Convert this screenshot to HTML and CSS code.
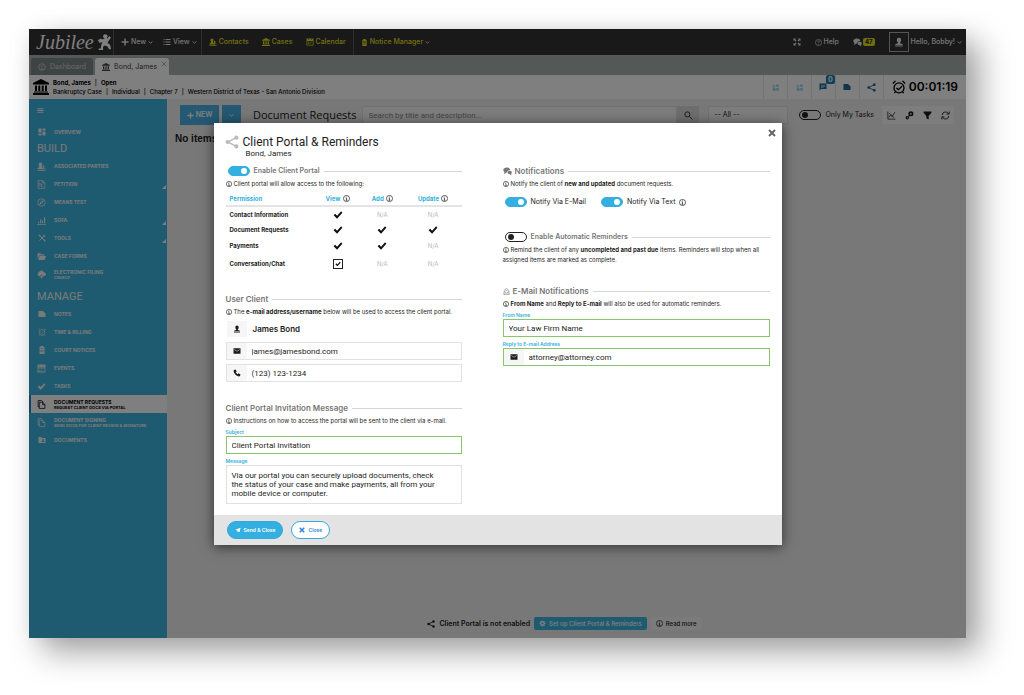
FILE: index.html
```html
<!DOCTYPE html>
<html lang="en">
<head>
<meta charset="utf-8">
<title>Jubilee - Client Portal &amp; Reminders</title>
<meta name="viewport" content="width=device-width, initial-scale=1">
<link rel="stylesheet" href="styles.css">
</head>
<body>
<svg class="sprite" aria-hidden="true">
  <symbol id="plus" viewBox="0 0 16 16"><path d="M6.500 1h3v5.500h5.500v3H9.500V15h-3V9.500H1v-3h5.500z"/></symbol>
  <symbol id="list" viewBox="0 0 16 16"><path d="M1 2h2v2H1zM5 2h10v2H5zM1 7h2v2H1zM5 7h10v2H5zM1 12h2v2H1zM5 12h10v2H5z"/></symbol>
  <symbol id="chevron" viewBox="0 0 16 16"><path d="M2 5l6 5 6-5" fill="none" stroke="currentColor" stroke-width="3"/></symbol>
  <symbol id="contacts" viewBox="0 0 16 16"><path d="M6 1a3 3 0 0 1 3 3c0 1.500-.7 2.500-1 3v2l4 2v2H1v-2l3-2V7C3.500 6 3 5.500 3 4a3 3 0 0 1 3-3zM1 14h14v1.500H1zM10 6a2 2 0 0 1 3 2c0 1 0 2-.5 2l2.500 1.500V13h-2v-2l-3-2z"/></symbol>
  <symbol id="bank" viewBox="0 0 16 16"><path d="M8 0l8 4v1.500H0V4zM2 6.500h2V12H2zM5.300 6.500h2V12h-2zM8.700 6.500h2V12h-2zM12 6.500h2V12h-2zM1 12.500h14v1H1zM0 14h16v2H0z"/></symbol>
  <symbol id="calendar" viewBox="0 0 16 16"><path fill-rule="evenodd" d="M1 1h14v14H1zM2.500 6v7.500h11V6zM4 7.500h2v1.500H4zM7 7.500h2v1.500H7zM10 7.500h2v1.500h-2zM4 10.500h2V12H4zM7 10.500h2V12H7zM4 2.500V4h1.500V2.500zM10.500 2.500V4H12V2.500z"/></symbol>
  <symbol id="clipboard" viewBox="0 0 16 16"><path fill-rule="evenodd" d="M5 0h6v2h2v14H3V2h2zM5 5v1h6V5zM5 8v1h6V8zM5 11v1h6v-1z"/></symbol>
  <symbol id="expand" viewBox="0 0 16 16"><path d="M1 1h5L4.500 2.500 7 5 5 7 2.500 4.500 1 6zM15 1v5l-1.500-1.500L11 7 9 5l2.500-2.500L10 1zM1 15v-5l1.500 1.500L5 9l2 2-2.500 2.500L6 15zM15 15h-5l1.500-1.500L9 11l2-2 2.500 2.500L15 10z"/></symbol>
  <symbol id="help" viewBox="0 0 16 16"><g fill="none" stroke="currentColor" stroke-width="1.500"><circle cx="8" cy="8" r="7"/><path d="M5.800 6.300a2.200 2.200 0 1 1 3.200 2c-.8.400-1 .7-1 1.700M8 11.300v1.400"/></g></symbol>
  <symbol id="info" viewBox="0 0 16 16"><g fill="none" stroke="currentColor"><circle cx="8" cy="8" r="7" stroke-width="1.600"/><path d="M6 7h2v5M6 12h4M8 3.500v1.800" stroke-width="1.600"/></g></symbol>
  <symbol id="chat" viewBox="0 0 16 16"><path d="M7 1c3.500 0 6 2 6 4.500-3 0-5.500 1.500-5.500 4.300H6L2 13l.5-4C1.500 8.200.5 7 .5 5.500.5 3 3.500 1 7 1zM12 6.800c2 0 3.700 1.300 3.700 3 0 1-.5 1.800-1.300 2.300l.6 2.900-2.800-2c-2.200 0-3.800-1.300-3.800-3.100s1.600-3.100 3.600-3.100z"/></symbol>
  <symbol id="user" viewBox="0 0 16 16"><path d="M8 1a3.500 3.500 0 0 1 3.300 4c0 2-.8 2.700-1.500 3.500V10l4.200 1.500V13H2v-1.500L6.200 10V8.500C5.500 7.700 4.700 7 4.700 5A3.500 3.500 0 0 1 8 1zM2 14h12v1H2z"/></symbol>
  <symbol id="gauge" viewBox="0 0 16 16"><g fill="none" stroke="currentColor" stroke-width="1.500"><circle cx="8" cy="8" r="6.500"/><path d="M8 4v5M5 12h6"/></g></symbol>
  <symbol id="cross" viewBox="0 0 16 16"><path d="M2 2l12 12M14 2L2 14" fill="none" stroke="currentColor" stroke-width="4"/></symbol>
  <symbol id="thincross" viewBox="0 0 16 16"><path d="M2 2l12 12M14 2L2 14" fill="none" stroke="currentColor" stroke-width="2"/></symbol>
  <symbol id="unlink" viewBox="0 0 16 16"><path d="M2 2l5 4M3 6v7h4M2 14h5v-4M9 3h5v4M10 14h4V9M9 6l4-4M9 9l4 4" fill="none" stroke="currentColor" stroke-width="1.600"/></symbol>
  <symbol id="comment" viewBox="0 0 16 16"><path fill-rule="evenodd" d="M1 1h14v11H4l-3 3zM4 4v1.200h8V4zM4 6.300v1.200h8V6.300zM4 8.500v1.200h5V8.500z"/></symbol>
  <symbol id="note" viewBox="0 0 16 16"><path d="M1 2h9l5 5v7H1z"/></symbol>
  <symbol id="share" viewBox="0 0 16 16"><path d="M13 3L3 8l10 5" fill="none" stroke="currentColor" stroke-width="1.600"/><circle cx="13" cy="3" r="2.400"/><circle cx="3" cy="8" r="2.400"/><circle cx="13" cy="13" r="2.400"/></symbol>
  <symbol id="alarm" viewBox="0 0 16 16"><g fill="none" stroke="currentColor" stroke-width="1.500"><circle cx="8" cy="9" r="5.700"/><path d="M1 4l3-3M15 4l-3-3M5 9l2.200 2.200L11.500 7M4 13.500L2.500 15M12 13.500l1.500 1.500"/></g></symbol>
  <symbol id="search" viewBox="0 0 16 16"><g fill="none" stroke="currentColor" stroke-width="1.500"><circle cx="6" cy="6" r="4.500"/><path d="M9.500 9.500L15 15"/></g></symbol>
  <symbol id="chart" viewBox="0 0 16 16"><path d="M1.500 1v13.500H15M3 12l3-5 3 3 5-8M4 4l9 8" fill="none" stroke="currentColor" stroke-width="1.300"/></symbol>
  <symbol id="key" viewBox="0 0 16 16"><g fill="none" stroke="currentColor"><circle cx="10.500" cy="5" r="3" stroke-width="3"/><path d="M8 8l-2 2" stroke-width="2"/><circle cx="4" cy="12" r="2" stroke-width="2"/></g></symbol>
  <symbol id="filter" viewBox="0 0 16 16"><path d="M1 1h14v2l-5 6v6l-4-2V9L1 3z"/></symbol>
  <symbol id="refresh" viewBox="0 0 16 16"><path d="M2 7a6 6 0 0 1 11-2.500M14 9a6 6 0 0 1-11 2.500M14.500 1v4.500H10M1.500 15v-4.500H6" fill="none" stroke="currentColor" stroke-width="1.600"/></symbol>
  <symbol id="menu" viewBox="0 0 16 16"><path d="M1 3h14v2H1zM1 7h14v2H1zM1 11h14v2H1z"/></symbol>
  <symbol id="tiles" viewBox="0 0 16 16"><path d="M1 1h6v8H1zM9 1h6v4H9zM9 7h6v8H9zM1 11h6v4H1z"/></symbol>
  <symbol id="petition" viewBox="0 0 16 16"><path d="M2 1h8l4 4v10H2zM10 1v4h4M5 4v8M8 6v6h3M6 9h2" fill="none" stroke="currentColor" stroke-width="1.300"/></symbol>
  <symbol id="compass" viewBox="0 0 16 16"><circle cx="8" cy="8" r="6.700" fill="none" stroke="currentColor" stroke-width="1.400"/><path fill-rule="evenodd" d="M12.500 3.500L9.500 9.500l-6 3 3-6zM8 7a1 1 0 1 0 .1 0z"/></symbol>
  <symbol id="bars" viewBox="0 0 16 16"><path d="M0 14h16v1.500H0zM2 10h2v3H2zM5.500 6h2v7h-2zM9 8h2v5H9zM12.500 2h2v11h-2z"/></symbol>
  <symbol id="tools" viewBox="0 0 16 16"><path d="M3 3l10 10M13 3L3 13" fill="none" stroke="currentColor" stroke-width="2"/><path d="M1 3l2-2 3 3-2 2zM11 1l-1 4 4 1 1-2-2 0 0-2z"/><circle cx="13" cy="13" r="1.800"/></symbol>
  <symbol id="folder" viewBox="0 0 16 16"><path d="M1 2h5l1 2h6v2H4l-3 6zM4.500 7H16l-2.500 7H2z"/></symbol>
  <symbol id="cloud" viewBox="0 0 16 16"><path d="M4 11a3.500 3.500 0 0 1-.5-6.800A4.500 4.500 0 0 1 12 4a3.500 3.500 0 0 1 .5 7H11L8 8l-3 3zM8 9.500l3 3H9V15H7v-2.500H5z"/></symbol>
  <symbol id="check" viewBox="0 0 16 16"><path d="M1 8.500L3.500 6l3 3L13 2l2 2.500L6.500 14z"/></symbol>
  <symbol id="copy" viewBox="0 0 16 16"><path d="M4 4h6l4 4v7H4zM4 12H2V1h6l3 3M10 4v4h4" fill="none" stroke="currentColor" stroke-width="1.300"/></symbol>
  <symbol id="userfolder" viewBox="0 0 16 16"><path fill-rule="evenodd" d="M1 2h5l1.500 2H15v10H1zM10 6a1.500 1.500 0 1 0 .1 0zM7 12h6c0-2-1.500-2.500-3-2.500S7 10 7 12z"/></symbol>
  <symbol id="mail" viewBox="0 0 16 16"><path fill-rule="evenodd" d="M1 2.500h14v11H1zM2.500 4.500v1.200L8 9.200l5.500-3.500V4.500L8 8z"/></symbol>
  <symbol id="mailopen" viewBox="0 0 16 16"><path d="M2 8v7h12V8M2 8l6 4 6-4M4 9V4l4-3 4 3v5M6 5.500h4M2 15l4-4M14 15l-4-4" fill="none" stroke="currentColor" stroke-width="1.200"/></symbol>
  <symbol id="phone" viewBox="0 0 16 16"><path d="M2 2l3-1 2.500 4-2 1.700c.8 1.700 2 3 3.800 3.800l1.700-2 4 2.500-1 3c-1 1-3 1-5 0C5.500 12.500 3 9.500 1.800 6.500 1 4.500 1 3 2 2z"/></symbol>
  <symbol id="send" viewBox="0 0 16 16"><path d="M1 7l14-5-3 12-4-3-2 3V9l6-4-7 4z"/></symbol>
  <symbol id="gear" viewBox="0 0 16 16"><circle cx="8" cy="8" r="4" fill="none" stroke="currentColor" stroke-width="3"/><path d="M8 .8v14.400M.8 8h14.400M3 3l10 10M13 3L3 13" fill="none" stroke="currentColor" stroke-width="2" stroke-dasharray="3 8.400 3"/></symbol>
  <symbol id="acrobat" viewBox="0 0 16 18"><circle cx="9.500" cy="2.500" r="2.500"/><path d="M1 7l3-2 2 1 4-2 2 1 2-3 2 2-3 4-1 2 3 2 1 5-2 .5-2-3.500-3-1-2 1 0 4-5 0v-1.500h2.200L5 12l1-3-3 1z"/></symbol>
</svg>

<div class="app">
  <header class="topbar">
    <a class="logo" href="#">Jubilee <svg class="logo-mark"><use href="#acrobat"/></svg></a>
    <nav class="topnav">
      <button class="toplink"><svg class="i8"><use href="#plus"/></svg>New<svg class="i5"><use href="#chevron"/></svg></button>
      <button class="toplink"><svg class="i8"><use href="#list"/></svg>View<svg class="i5"><use href="#chevron"/></svg></button>
    </nav>
    <nav class="topnav wide yellow">
      <a class="toplink" href="#"><svg class="i8"><use href="#contacts"/></svg>Contacts</a>
      <a class="toplink" href="#"><svg class="i8"><use href="#bank"/></svg>Cases</a>
      <a class="toplink" href="#"><svg class="i8"><use href="#calendar"/></svg>Calendar</a>
    </nav>
    <nav class="topnav yellow last">
      <button class="toplink"><svg class="i7"><use href="#clipboard"/></svg>Notice Manager<svg class="i5"><use href="#chevron"/></svg></button>
    </nav>
    <div class="account">
      <button class="toplink" aria-label="Full screen"><svg class="i8"><use href="#expand"/></svg></button>
      <a class="toplink" href="#"><svg class="i7"><use href="#help"/></svg>Help</a>
      <a class="toplink chat" href="#" aria-label="47 messages"><svg class="i9"><use href="#chat"/></svg><span class="count">47</span></a>
      <button class="toplink me"><span class="avatar"><svg class="i10"><use href="#user"/></svg></span>Hello, Bobby!<svg class="i5"><use href="#chevron"/></svg></button>
    </div>
  </header>

  <nav class="tabs">
    <a class="tab" href="#"><svg class="i8"><use href="#gauge"/></svg>Dashboard</a>
    <a class="tab current" href="#"><svg class="i8"><use href="#bank"/></svg>Bond, James<svg class="i6 tab-close"><use href="#thincross"/></svg></a>
  </nav>

  <div class="casebar">
    <svg class="i16"><use href="#bank"/></svg>
    <div class="case">
      <div><b>Bond, James</b><i>|</i><b>Open</b></div>
      <div>Bankruptcy Case<i>|</i>Individual<i>|</i>Chapter 7<i>|</i>Western District of Texas - San Antonio Division</div>
    </div>
    <div class="case-tools">
      <button class="case-tool light" aria-label="Unlink"><svg class="i7"><use href="#unlink"/></svg></button>
      <button class="case-tool light" aria-label="Unlink all"><svg class="i7"><use href="#unlink"/></svg></button>
      <button class="case-tool" aria-label="Comments"><svg class="i8"><use href="#comment"/></svg><span class="badge">0</span></button>
      <button class="case-tool" aria-label="Notes"><svg class="i8"><use href="#note"/></svg></button>
      <button class="case-tool" aria-label="Share"><svg class="i9"><use href="#share"/></svg></button>
      <div class="timer"><svg class="i14"><use href="#alarm"/></svg>00:01:19</div>
    </div>
  </div>

  <div class="main">
    <nav class="sidebar">
      <button class="side-menu" aria-label="Menu"><svg class="i7"><use href="#menu"/></svg></button>
      <a class="side" href="#"><svg class="i8"><use href="#tiles"/></svg><span>OVERVIEW</span></a>
      <h2 class="side-head">BUILD</h2>
      <a class="side" href="#"><svg class="i9"><use href="#contacts"/></svg><span>ASSOCIATED PARTIES</span></a>
      <a class="side more" href="#"><svg class="i9"><use href="#petition"/></svg><span>PETITION</span></a>
      <a class="side" href="#"><svg class="i9"><use href="#compass"/></svg><span>MEANS TEST</span></a>
      <a class="side more" href="#"><svg class="i9"><use href="#bars"/></svg><span>SOFA</span></a>
      <a class="side more" href="#"><svg class="i8"><use href="#tools"/></svg><span>TOOLS</span></a>
      <a class="side" href="#"><svg class="i9"><use href="#folder"/></svg><span>CASE FORMS</span></a>
      <a class="side" href="#"><svg class="i9"><use href="#cloud"/></svg><span>ELECTRONIC FILING<small>CM/ECF</small></span></a>
      <h2 class="side-head second">MANAGE</h2>
      <a class="side" href="#"><svg class="i8"><use href="#note"/></svg><span>NOTES</span></a>
      <a class="side" href="#"><svg class="i8"><use href="#alarm"/></svg><span>TIME &amp; BILLING</span></a>
      <a class="side" href="#"><svg class="i8"><use href="#clipboard"/></svg><span>COURT NOTICES</span></a>
      <a class="side" href="#"><svg class="i9"><use href="#calendar"/></svg><span>EVENTS</span></a>
      <a class="side" href="#"><svg class="i9"><use href="#check"/></svg><span>TASKS</span></a>
      <a class="side current" href="#"><svg class="i9"><use href="#copy"/></svg><span>DOCUMENT REQUESTS<small>REQUEST CLIENT DOCS VIA PORTAL</small></span></a>
      <a class="side" href="#"><svg class="i9"><use href="#copy"/></svg><span>DOCUMENT SIGNING<small>SEND DOCS FOR CLIENT REVIEW &amp; SIGNATURE</small></span></a>
      <a class="side" href="#"><svg class="i8"><use href="#userfolder"/></svg><span>DOCUMENTS</span></a>
    </nav>

    <main class="content">
      <div class="toolbar">
        <button class="new"><svg class="i7"><use href="#plus"/></svg>NEW</button>
        <button class="new drop" aria-label="More"><svg class="i5"><use href="#chevron"/></svg></button>
        <h1 class="page-title">Document Requests</h1>
        <input class="search" type="search" aria-label="Search" placeholder="Search by title and description...">
        <button class="search-go" aria-label="Search"><svg class="i9"><use href="#search"/></svg></button>
        <select class="filter-all" aria-label="Filter"><option>-- All --</option></select>
        <label class="switch only-mine"><input type="checkbox" role="switch">Only My Tasks</label>
        <div class="actions">
          <button aria-label="Chart"><svg class="i9"><use href="#chart"/></svg></button>
          <button aria-label="Settings"><svg class="i9"><use href="#key"/></svg></button>
          <button aria-label="Filter"><svg class="i9"><use href="#filter"/></svg></button>
          <button aria-label="Refresh"><svg class="i9"><use href="#refresh"/></svg></button>
        </div>
      </div>
      <p class="empty">No items</p>
      <div class="status">
        <svg class="i8"><use href="#share"/></svg>
        <span class="status-text">Client Portal is not enabled</span>
        <button class="setup"><svg class="i7"><use href="#gear"/></svg>Set up Client Portal &amp; Reminders</button>
        <button class="read"><svg class="i7"><use href="#info"/></svg>Read more</button>
      </div>
    </main>
  </div>

  <div class="overlay">
    <form class="modal" role="dialog" aria-labelledby="dialog-title">
      <header class="modal-head">
        <svg class="i14"><use href="#share"/></svg>
        <div>
          <h2 class="modal-title" id="dialog-title">Client Portal &amp; Reminders</h2>
          <p class="modal-sub">Bond, James</p>
        </div>
        <button class="modal-close" type="button" aria-label="Close dialog"><svg class="i8"><use href="#cross"/></svg></button>
      </header>

      <div class="columns">
        <div class="column">
          <section>
            <div class="legend toggle"><label class="switch"><input type="checkbox" role="switch" checked>Enable Client Portal</label></div>
            <p class="hint"><svg class="i6"><use href="#info"/></svg>Client portal will allow access to the following:</p>
            <table class="perms">
              <thead><tr><th scope="col">Permission</th><th scope="col">View <svg class="i7"><use href="#info"/></svg></th><th scope="col">Add <svg class="i7"><use href="#info"/></svg></th><th scope="col">Update <svg class="i7"><use href="#info"/></svg></th></tr></thead>
              <tbody>
                <tr><th scope="row">Contact Information</th><td><svg class="i10"><use href="#check"/></svg></td><td>N/A</td><td>N/A</td></tr>
                <tr><th scope="row">Document Requests</th><td><svg class="i10"><use href="#check"/></svg></td><td><svg class="i10"><use href="#check"/></svg></td><td><svg class="i10"><use href="#check"/></svg></td></tr>
                <tr><th scope="row">Payments</th><td><svg class="i10"><use href="#check"/></svg></td><td><svg class="i10"><use href="#check"/></svg></td><td>N/A</td></tr>
                <tr class="tall"><th scope="row"><label for="chat-view">Conversation/Chat</label></th><td><span class="tick"><input id="chat-view" type="checkbox" checked><svg class="i6"><use href="#check"/></svg></span></td><td>N/A</td><td>N/A</td></tr>
              </tbody>
            </table>
          </section>

          <section>
            <h3 class="legend">User Client</h3>
            <p class="hint"><svg class="i6"><use href="#info"/></svg>The <b>e-mail address/username</b> below will be used to access the client portal.</p>
            <div class="stack">
              <div class="field plain"><span class="addon"><svg class="i8"><use href="#user"/></svg></span><strong>James Bond</strong></div>
              <div class="field"><span class="addon"><svg class="i8"><use href="#mail"/></svg></span><input type="email" aria-label="E-mail" value="james@jamesbond.com"></div>
              <div class="field"><span class="addon"><svg class="i8"><use href="#phone"/></svg></span><input type="tel" aria-label="Phone" value="(123) 123-1234"></div>
            </div>
          </section>

          <section>
            <h3 class="legend">Client Portal Invitation Message</h3>
            <p class="hint"><svg class="i6"><use href="#info"/></svg>Instructions on how to access the portal will be sent to the client via e-mail.</p>
            <label class="caption" for="subject">Subject</label>
            <div class="field valid"><input id="subject" type="text" value="Client Portal Invitation"></div>
            <label class="caption next" for="message">Message</label>
            <textarea class="message" id="message" rows="3">Via our portal you can securely upload documents, check the status of your case and make payments, all from your mobile device or computer.</textarea>
          </section>
        </div>

        <div class="column">
          <section>
            <h3 class="legend"><svg class="i9"><use href="#chat"/></svg>Notifications</h3>
            <p class="hint"><svg class="i6"><use href="#info"/></svg>Notify the client of <b>new and updated</b> document requests.</p>
            <div class="switches">
              <label class="switch"><input type="checkbox" role="switch" checked>Notify Via E-Mail</label>
              <label class="switch"><input type="checkbox" role="switch" checked>Notify Via Text <svg class="i7"><use href="#info"/></svg></label>
            </div>
          </section>

          <section>
            <div class="legend toggle"><label class="switch"><input type="checkbox" role="switch">Enable Automatic Reminders</label></div>
            <p class="hint"><svg class="i6"><use href="#info"/></svg>Remind the client of any <b>uncompleted and past due</b> items. Reminders will stop when all assigned items are marked as complete.</p>
          </section>

          <section>
            <h3 class="legend"><svg class="i7"><use href="#mailopen"/></svg>E-Mail Notifications</h3>
            <p class="hint"><svg class="i6"><use href="#info"/></svg><b>From Name</b> and <b>Reply to E-mail</b> will also be used for automatic reminders.</p>
            <label class="caption" for="from">From Name</label>
            <div class="field valid"><input id="from" type="text" value="Your Law Firm Name"></div>
            <label class="caption next" for="reply">Reply to E-mail Address</label>
            <div class="field valid"><span class="addon"><svg class="i8"><use href="#mail"/></svg></span><input id="reply" type="email" value="attorney@attorney.com"></div>
          </section>
        </div>
      </div>

      <footer class="modal-foot">
        <button class="pill primary" type="button"><svg class="i6"><use href="#send"/></svg>Send &amp; Close</button>
        <button class="pill" type="button"><svg class="i6"><use href="#cross"/></svg>Close</button>
      </footer>
    </form>
  </div>
</div>
</body>
</html>
```
FILE: styles.css
```css
* { box-sizing: border-box; }

body {
  margin: 0;
  min-height: 100vh;
  padding: 29px 58px 57px 29px;
  display: flex;
  background: #fff;
  color: #1c1c1c;
  font: 7px/10px Inter, "Liberation Sans", sans-serif;
}

h1, h2, h3, p { margin: 0; font-weight: 400; }
a { color: inherit; text-decoration: none; }
button, input, select, textarea { font: inherit; color: inherit; margin: 0; }
button { border: 0; padding: 0; background: none; }

.sprite { position: absolute; width: 0; height: 0; }
svg { fill: currentColor; flex: none; }
.i5 { width: 5px; height: 5px; }
.i6 { width: 6px; height: 6px; }
.i7 { width: 7px; height: 7px; }
.i8 { width: 8px; height: 8px; }
.i9 { width: 9px; height: 9px; }
.i10 { width: 10px; height: 10px; }
.i14 { width: 14px; height: 14px; }
.i16 { width: 16px; height: 16px; }

.app {
  position: relative;
  flex: 1;
  min-width: 0;
  display: flex;
  flex-direction: column;
  background: #f0f0f0;
  box-shadow: 14px 14px 30px rgba(0, 0, 0, .36), 0 0 18px rgba(0, 0, 0, .06);
}

/* Top bar */
.topbar {
  height: 26px;
  display: flex;
  align-items: stretch;
  background: #333;
  color: #e8e8e8;
  font-weight: 500;
}
.logo {
  width: 85px;
  display: flex;
  align-items: center;
  gap: 3px;
  padding-left: 7px;
  border-right: 1px solid #5a5a5a;
  color: #fff;
  font: italic 400 20px/26px "Liberation Serif", serif;
}
.logo-mark { width: 14px; height: 16px; }
.topnav {
  display: flex;
  align-items: center;
  gap: 10px;
  padding: 0 4px 0 7px;
  border-right: 1px solid #5a5a5a;
}
.topnav.wide { gap: 13px; padding: 0 7px; }
.topnav.last { border: 0; }
.yellow { color: #e4dc20; }
.toplink { display: flex; align-items: center; gap: 2px; white-space: nowrap; }
.account { margin-left: auto; display: flex; align-items: center; gap: 14px; padding-right: 4px; }
.chat { gap: 1px; }
.count { padding: 0 2px; border-radius: 2px; background: #e0d820; color: #222; font-size: 6px; line-height: 8px; font-weight: 700; }
.avatar { width: 20px; height: 20px; display: grid; place-items: center; border: 1px solid #aaa; }

/* Case tabs */
.tabs { height: 20px; display: flex; align-items: flex-end; gap: 2px; padding-left: 2px; background: #a8b2b0; }
.tab {
  height: 17px;
  display: flex;
  align-items: center;
  gap: 4px;
  padding: 0 7px;
  border-radius: 3px 3px 0 0;
  background: #7c8886;
  color: #d0d4d4;
}
.tab.current { padding-right: 2px; background: #fff; color: #444; }
.tab-close { align-self: flex-start; margin-top: 3px; color: #999; }

/* Case summary */
.casebar { height: 24px; display: flex; align-items: center; gap: 4px; padding-left: 4px; background: #fff; color: #000; }
.case { font-size: 6px; line-height: 9px; font-weight: 500; }
.case i { margin: 0 4px; font-style: normal; }
.case-tools { align-self: stretch; margin-left: auto; display: flex; }
.case-tool { position: relative; width: 24px; display: grid; place-items: center; border-left: 1px solid #e6e6e6; color: #1a6c98; }
.case-tool.light { color: #3cb4e0; }
.badge { position: absolute; top: 0; right: 0; width: 9px; border-radius: 2px; background: #1f7cb0; color: #fff; font-size: 7px; line-height: 9px; font-weight: 700; }
.timer { display: flex; align-items: center; gap: 3px; padding: 0 8px; border-left: 1px solid #e6e6e6; font-size: 12px; font-weight: 600; }

/* Sidebar */
.main { flex: 1; display: flex; }
.sidebar {
  width: 138px;
  padding-top: 3px;
  background: #3cb4e0;
  color: #f4f4f4;
  font: 700 5px/6px Inter, sans-serif;
}
.side-menu { display: block; height: 21px; padding: 0 8px 3px; }
.side { position: relative; height: 18px; display: grid; grid-template-columns: 9px 1fr; align-items: center; justify-items: center; gap: 8px; padding-left: 8px; }
.side span { justify-self: start; }
.side small { display: block; font-size: 4px; line-height: 5px; }
.side.current { background: #fff; color: #000; border-left: 2px solid #1f8cc8; padding-left: 6px; }
.side.more::after { content: ""; position: absolute; right: 1px; bottom: 4px; border: 2px solid transparent; border-right-color: #fff; border-bottom-color: #fff; }
.side-head { height: 16px; padding-left: 8px; font: 400 11px/16px Roboto, sans-serif; }
.side-head.second { margin-top: 6px; }

/* Content */
.content { flex: 1; min-width: 0; display: flex; flex-direction: column; padding: 6px 12px 8px 8px; }
.toolbar { display: flex; align-items: center; padding-left: 5px; }
.new { display: flex; align-items: center; justify-content: center; gap: 2px; width: 39px; height: 20px; background: #4ab0e4; color: #fff; font-weight: 600; }
.new.drop { width: 19px; margin-left: 3px; }
.page-title { margin: 0 5px 0 12px; font: 400 11px/20px "Open Sans", sans-serif; white-space: nowrap; }
.search { flex: 1; min-width: 0; height: 18px; padding: 0 6px; border: 1px solid #e2e2e2; background: #fafafa; font: 8px/10px Roboto, sans-serif; }
.search::placeholder { color: #888; }
.search-go { width: 22px; height: 18px; display: grid; place-items: center; background: #dcdcdc; }
.filter-all { appearance: none; width: 80px; height: 18px; margin: 0 11px 0 9px; padding: 0 5px; border: 1px solid #e2e2e2; border-radius: 0; background: #fafafa; }
.only-mine { margin-right: 8px; }
.actions { display: flex; background: #fafafa; }
.actions button { width: 18px; height: 18px; display: grid; place-items: center; }
.empty { margin-top: 8px; font: 700 10px/12px "Liberation Sans", sans-serif; }
.status { margin-top: auto; display: flex; align-items: center; justify-content: center; gap: 4px; font-weight: 500; }
.status-text { font-weight: 600; }
.setup, .read { height: 13px; display: flex; align-items: center; gap: 3px; padding: 0 5px; border-radius: 2px; font-size: 6px; }
.setup { background: #3cb4e0; color: #fff; }
.read { background: #f6f6f6; }

/* Switches */
.switch { display: flex; align-items: center; gap: 4px; white-space: nowrap; }
.switch input {
  appearance: none;
  width: 22px;
  height: 10px;
  display: flex;
  align-items: center;
  padding: 0 2px;
  border: 1px solid #222;
  border-radius: 5px;
}
.switch input::before { content: ""; width: 6px; height: 6px; border-radius: 3px; background: #222; }
.switch input:checked { justify-content: flex-end; border-color: #34b0e0; background: #34b0e0; }
.switch input:checked::before { background: #fff; }

/* Dialog */
.overlay { position: absolute; inset: 0; display: flex; justify-content: center; align-items: flex-start; padding-top: 94px; background: rgba(0, 0, 0, .5); }
.modal { width: 568px; max-width: 100%; background: #fff; box-shadow: 0 2px 12px rgba(0, 0, 0, .6); }
.modal-head { display: flex; align-items: flex-start; gap: 4px; padding: 12px 6px 6px 11px; }
.modal-head > svg { color: #bbb; }
.modal-title { font: 400 12px/14px Roboto, sans-serif; }
.modal-sub { padding-left: 3px; font: 8px/10px Roboto, sans-serif; }
.modal-close { margin: -6px 0 0 auto; color: #666; }
.columns { display: grid; grid-template-columns: 236fr 267fr; gap: 41px; padding: 0 12px 11px; }
.column { display: flex; flex-direction: column; gap: 20px; }

.legend { height: 12px; display: flex; align-items: center; gap: 3px; color: #777; font-size: 8px; font-weight: 600; white-space: nowrap; }
.legend::after { content: ""; flex: 1; height: 1px; margin-left: 1px; background: #d4d4d4; }
.legend.toggle { padding-left: 2px; font-size: 7px; }
.hint { margin-top: 2px; font-size: 6px; line-height: 10px; }
.hint svg { margin-right: 2px; vertical-align: -1px; }

.perms { width: 100%; margin-top: 4px; border-collapse: collapse; table-layout: fixed; text-align: center; font-size: 6px; line-height: 10px; }
.perms th { padding: 0; font-weight: 700; }
.perms td { padding: 0; color: #bbb; }
.perms td svg { display: block; margin: auto; color: #111; }
.perms thead th { height: 13px; width: 19%; border-bottom: 2px solid #e4e4e4; color: #34b0e0; }
.perms thead th:first-child { width: 38%; }
.perms thead th:last-child { width: 24%; }
.perms thead svg { margin-left: 1px; color: #222; vertical-align: -1px; }
.perms th:first-child { padding-left: 4px; text-align: left; }
.perms tbody tr { height: 16px; }
.perms tbody .tall { height: 19px; }
.tick { display: inline-grid; place-items: center; vertical-align: top; }
.tick > * { grid-area: 1 / 1; }
.tick input { appearance: none; width: 10px; height: 10px; border: 1px solid #222; }
.tick svg { pointer-events: none; }
.tick input:not(:checked) + svg { visibility: hidden; }

.stack { display: flex; flex-direction: column; gap: 4px; margin-top: 3px; }
.field { height: 18px; display: flex; align-items: center; border: 1px solid #e2e2e2; font: 8px/10px Roboto, sans-serif; }
.field.plain { border-color: transparent; }
.field.valid { border-color: #8cc46c; }
.addon { align-self: stretch; width: 20px; display: grid; place-items: center; background: #f6f6f6; }
.field input { flex: 1; min-width: 0; height: 16px; padding: 0 5px; border: 0; background: none; }
.field strong { padding-left: 6px; font: 600 8px/10px Inter, sans-serif; }
.caption { display: block; margin-top: 2px; color: #34b0e0; font-size: 5px; line-height: 8px; font-weight: 600; }
.caption.next { margin-top: 3px; }
.message { display: block; width: 100%; height: 39px; padding: 5px 20px 5px 5px; border: 1px solid #e2e2e2; resize: none; font: 8px/9px Roboto, sans-serif; }
.switches { display: flex; gap: 15px; margin-top: 8px; padding: 0 0 4px 2px; }

.modal-foot { display: flex; gap: 8px; padding: 6px 13px; background: #e3e3e3; }
.pill { height: 18px; display: flex; align-items: center; gap: 3px; padding: 0 7px; border: 1px solid #34a8dc; border-radius: 9px; background: #fff; color: #2a86d8; font-size: 5px; font-weight: 600; }
.pill.primary { background: #34b0e0; color: #fff; }
```
